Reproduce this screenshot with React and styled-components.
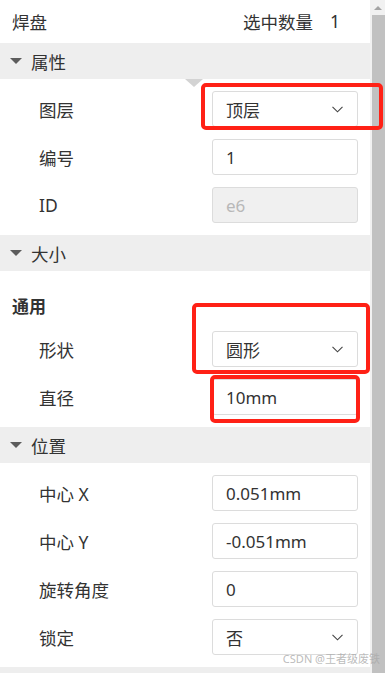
import React from "react";
import styled, { createGlobalStyle } from "styled-components";

const Global = createGlobalStyle`
  html, body { margin: 0; padding: 0; background: #fff; }
  body { font-family: "Noto Sans", "Noto Sans CJK SC", sans-serif; color: #333; }
  * { box-sizing: border-box; }
`;

const Page = styled.div`
  position: relative;
  width: 385px;
  height: 673px;
  overflow: hidden;
  display: flex;
  align-items: stretch;
`;

const Panel = styled.div`
  flex: 1;
  min-width: 0;
  display: flex;
  flex-direction: column;
  background: #fff;
  & > * { flex-shrink: 0; }
`;

const ScrollBar = styled.div`
  width: 15px;
  flex-shrink: 0;
  display: flex;
  flex-direction: column;
  background: #f1f1f1;
`;

const ScrollArrow = styled.div`
  height: 15px;
  display: flex;
  align-items: center;
  justify-content: center;
  &::before {
    content: "";
    border-left: 4px solid transparent;
    border-right: 4px solid transparent;
    border-bottom: 4px solid #a3a3a3;
  }
`;

const ScrollThumb = styled.div`
  flex: 1;
  margin-left: 2px;
  background: #c1c1c1;
`;

const TopBar = styled.div`
  height: 43px;
  display: flex;
  align-items: center;
  justify-content: space-between;
  padding: 0 30px 0 12px;
  font-size: 17.5px;
`;

const Count = styled.span`
  display: flex;
  gap: 17px;
`;

const SectionHeader = styled.div`
  height: 36px;
  background: #eeeeee;
  display: flex;
  align-items: center;
  gap: 9px;
  padding-left: 10px;
  font-size: 17.5px;
  &::before {
    content: "";
    border-left: 6.5px solid transparent;
    border-right: 6.5px solid transparent;
    border-top: 6px solid #5c5c5c;
  }
`;

const SectionBody = styled.div`
  position: relative;
  padding: 12px 12px 12px 0;
  display: flex;
  flex-direction: column;
  gap: 12px;
`;

const Notch = styled.div`
  position: absolute;
  top: 0;
  left: 185px;
  border-left: 9px solid transparent;
  border-right: 9px solid transparent;
  border-top: 8px solid #d3d3d3;
`;

const SubTitle = styled.div`
  margin-top: 12px;
  height: 24px;
  line-height: 24px;
  padding-left: 12px;
  font-weight: bold;
  font-size: 17px;
`;

const Row = styled.div`
  display: grid;
  grid-template-columns: 1fr 146px;
  align-items: center;
  height: 36px;
  padding-left: 39px;
  font-size: 17.5px;
`;

const Field = styled.div`
  height: 36px;
  border: 1px solid #dcdcdc;
  border-radius: 3px;
  background: ${(p) => (p.$disabled ? "#f0f0f0" : "#fff")};
  color: ${(p) => (p.$disabled ? "#b8b8b8" : "#333")};
  display: flex;
  align-items: center;
  justify-content: space-between;
  padding: 0 14px 0 13px;
  font-size: 17px;
`;

const Chevron = () => (
  <svg width="11" height="7" viewBox="0 0 11 7">
    <path d="M0.5 0.8 L5.5 5.8 L10.5 0.8" fill="none" stroke="#444" strokeWidth="1.1" />
  </svg>
);

const Mark = styled.div`
  position: absolute;
  left: ${(p) => p.$x}px;
  top: ${(p) => p.$y}px;
  width: ${(p) => p.$w}px;
  height: ${(p) => p.$h}px;
  border: 4px solid #ff2116;
  border-radius: 5px;
  pointer-events: none;
`;

const Watermark = styled.div`
  position: absolute;
  right: 5px;
  top: 650px;
  font-size: 11px;
  color: rgba(170, 170, 170, 0.8);
  font-family: "Noto Sans", "Noto Sans CJK SC", sans-serif;
`;

const Input = ({ value, disabled }) => <Field $disabled={disabled}>{value}</Field>;
const Select = ({ value }) => (
  <Field>
    {value}
    <Chevron />
  </Field>
);

export default function App() {
  return (
    <>
      <Global />
      <Page>
        <Panel>
          <TopBar>
            <span>焊盘</span>
            <Count>
              <span>选中数量</span>
              <span>1</span>
            </Count>
          </TopBar>

          <SectionHeader>属性</SectionHeader>
          <SectionBody>
            <Notch />
            <Row>
              <span>图层</span>
              <Select value="顶层" />
            </Row>
            <Row>
              <span>编号</span>
              <Input value="1" />
            </Row>
            <Row>
              <span>ID</span>
              <Input value="e6" disabled />
            </Row>
          </SectionBody>

          <SectionHeader>大小</SectionHeader>
          <SectionBody>
            <SubTitle>通用</SubTitle>
            <Row>
              <span>形状</span>
              <Select value="圆形" />
            </Row>
            <Row>
              <span>直径</span>
              <Input value="10mm" />
            </Row>
          </SectionBody>

          <SectionHeader>位置</SectionHeader>
          <SectionBody>
            <Row>
              <span>中心 X</span>
              <Input value="0.051mm" />
            </Row>
            <Row>
              <span>中心 Y</span>
              <Input value="-0.051mm" />
            </Row>
            <Row>
              <span>旋转角度</span>
              <Input value="0" />
            </Row>
            <Row>
              <span>锁定</span>
              <Select value="否" />
            </Row>
          </SectionBody>

          <SectionHeader />
        </Panel>
        <ScrollBar>
          <ScrollArrow />
          <ScrollThumb />
        </ScrollBar>

        <Mark $x={201} $y={83} $w={182} $h={47} />
        <Mark $x={192} $y={303} $w={178} $h={71} />
        <Mark $x={210} $y={375} $w={150} $h={48} />
        <Watermark>CSDN @王者级废铁</Watermark>
      </Page>
    </>
  );
}
